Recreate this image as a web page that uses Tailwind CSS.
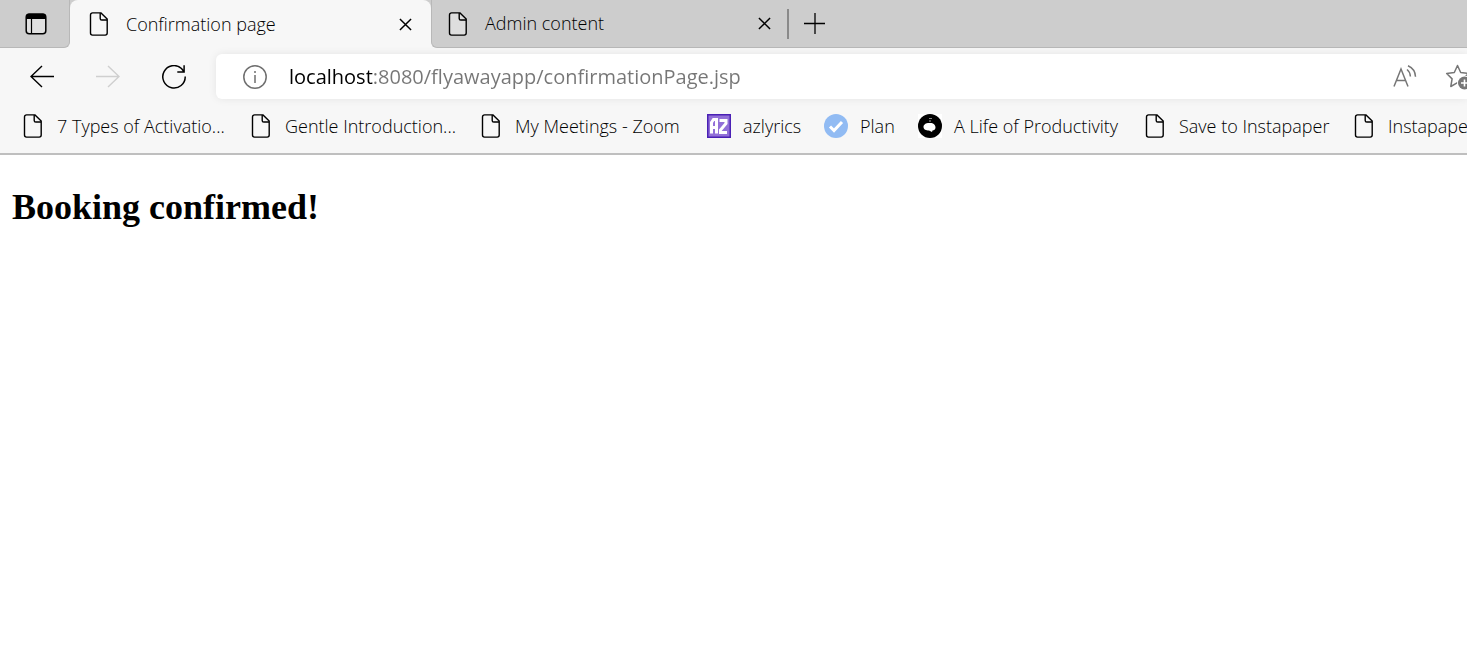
<!DOCTYPE html>
<html lang="en">
<head>
<meta charset="utf-8">
<title>Confirmation page</title>
<script src="https://cdn.jsdelivr.net/npm/@tailwindcss/browser@4"></script>
</head>
<body class="min-h-screen overflow-x-hidden bg-white font-['Open_Sans','Noto_Sans',sans-serif] text-black">
<svg class="hidden" aria-hidden="true">
  <symbol id="doc" viewBox="0 0 24 24"><path d="M5.5 .9H14l6.2 6.2v14a2 2 0 0 1-2 2H5.5a2 2 0 0 1-2-2V2.900a2 2 0 0 1 2-2z" fill="#f7f7f7" fill-opacity=".4" stroke="currentColor" stroke-width="1.400"/><path d="M13.200 1v5.400a1.600 1.600 0 0 0 1.600 1.600H20" fill="none" stroke="currentColor" stroke-width="1.400"/></symbol>
  <symbol id="close" viewBox="0 0 14 14"><path d="M1 1l12 12M13 1L1 13" fill="none" stroke="currentColor" stroke-width="1.600"/></symbol>
</svg>
<header class="overflow-hidden border-b-2 border-[#bfbfbf] bg-[#f7f7f7]">
  <div class="flex h-12 bg-[#f7f7f7]">
    <div class="flex w-[70px] shrink-0 items-center rounded-br-md border-r border-b border-[#b8b8b8] bg-[#cdcdcd] pl-6">
      <button aria-label="Tab actions"><svg class="block size-6" viewBox="0 0 24 24"><rect x="2.200" y="2.200" width="19.600" height="19.600" rx="3" fill="#e0e0e0" stroke="#000" stroke-width="1.500"/><path d="M2 7V4.500A3 3 0 0 1 5 1.500h14a3 3 0 0 1 3 3V7z"/><path d="M7.500 6v16" stroke="#000" stroke-width="1.200"/></svg></button>
    </div>
    <div class="w-[361px] shrink-0 bg-[#cdcdcd]">
      <div class="flex h-12 items-center rounded-t-lg bg-[#f7f7f7] pr-[19px] pl-[17px]">
        <svg class="size-6 shrink-0"><use href="#doc"/></svg>
        <span class="ml-[15px] flex-1 text-[18px] font-light">Confirmation page</span>
        <button aria-label="Close Confirmation page"><svg class="block size-[13px]"><use href="#close"/></svg></button>
      </div>
    </div>
    <div class="flex min-w-0 flex-1 items-center rounded-bl-md border-b border-l border-[#b8b8b8] bg-[#cdcdcd] pl-[14px]">
      <svg class="size-6 shrink-0"><use href="#doc"/></svg>
      <span class="ml-[15px] w-[273px] shrink-0 text-[18px] font-light">Admin content</span>
      <button aria-label="Close Admin content"><svg class="block size-[13px]"><use href="#close"/></svg></button>
      <span class="ml-4 mr-[15px] h-[30px] w-[2px] bg-[#8a8a8a]"></span>
      <button aria-label="New tab"><svg class="block size-[22px]" viewBox="0 0 22 22"><path d="M11 0v21M0 10.500h21" stroke="#000" stroke-width="1.300"/></svg></button>
    </div>
  </div>
  <div class="flex h-[57px] items-center pl-[30px]">
    <button aria-label="Back"><svg class="block size-6" viewBox="0 0 24 24" fill="none" stroke="#000" stroke-width="1.400"><path d="M24 11.500H1M12 1L1 11.500l11 10.500"/></svg></button>
    <button aria-label="Forward" disabled class="ml-[42px]"><svg class="block size-6" viewBox="0 0 24 24" fill="none" stroke="#cfcfcf" stroke-width="1.400"><path d="M0 11.500h23M12 1l11 10.500L12 22"/></svg></button>
    <button aria-label="Reload" class="ml-[42px]"><svg class="block size-6" viewBox="0 0 24 24" fill="none" stroke="#000" stroke-width="1.500"><path d="M23.200 11.500A11.200 11.200 0 1 1 19.500 3.500l2.500 3.200M22.100 .3V6.900h-6.800"/></svg></button>
    <div class="ml-[30px] flex h-[45px] min-w-0 flex-1 items-center rounded-l-md bg-white pl-[27px] shadow-[0_0_8px_rgba(0,0,0,0.08)]">
      <button aria-label="Site information"><svg class="block size-6" viewBox="0 0 24 24" fill="none" stroke="#6f6f6f" stroke-width="1.500"><circle cx="12" cy="12" r="11.200"/><path d="M12 10v8M12 6v2"/></svg></button>
      <input aria-label="Address" value="localhost:8080/flyawayapp/confirmationPage.jsp" class="ml-[22px] min-w-0 flex-1 bg-[linear-gradient(to_right,#000_84px,#767676_84px)] bg-clip-text text-[20px] text-transparent outline-none">
      <button aria-label="Read aloud"><svg class="block size-6" viewBox="0 0 24 24" fill="none" stroke="#767676" stroke-width="1.500"><path d="M1 21.500L8 4l7 17.500M3.500 15.500h9M14 4.500c2 1.500 3.200 3.800 3.400 7M15 .8c4.500 2 7.300 6 7.500 11"/></svg></button>
      <button aria-label="Add to favorites" class="-mr-1 ml-7 shrink-0"><svg class="block size-[26px]" viewBox="0 0 26 26"><path d="M12.500 1.500l3.200 7 7.800 1-5.700 5.400 1.400 7.600-6.700-3.800-6.700 3.800 1.300-7.600L1.700 9.500l7.600-1z" fill="none" stroke="#767676" stroke-width="1.500" stroke-linejoin="round"/><circle cx="19.500" cy="19" r="7.500" fill="#fff"/><circle cx="19.500" cy="19" r="6.500" fill="#767676"/><path d="M19.500 15.500v7M16 19h7" stroke="#fff" stroke-width="1.600"/></svg></button>
    </div>
  </div>
  <nav aria-label="Favorites" class="flex h-12 items-center pb-[6px] pl-[21px] text-[18px] font-light whitespace-nowrap">
    <a href="#" class="flex w-[228px] shrink-0 items-center gap-3"><svg class="size-6 shrink-0"><use href="#doc"/></svg>7 Types of Activatio...</a>
    <a href="#" class="flex w-[230px] shrink-0 items-center gap-3"><svg class="size-6 shrink-0"><use href="#doc"/></svg>Gentle Introduction...</a>
    <a href="#" class="flex w-[228px] shrink-0 items-center gap-3"><svg class="size-6 shrink-0"><use href="#doc"/></svg>My Meetings - Zoom</a>
    <a href="#" class="flex w-[117px] shrink-0 items-center gap-3"><svg class="size-6 shrink-0" viewBox="0 0 24 24"><rect width="24" height="24" fill="#4a20b5"/><rect x="1.500" y="1.500" width="21" height="21" fill="#9270d8"/><path d="M4.500 19.500V8.500L6.500 5.500H9.500V19.500M4.500 13.500H9.500M12.500 6.500H19V9.500L13.500 16V18.500H20" fill="none" stroke="#fff" stroke-width="3"/></svg>azlyrics</a>
    <a href="#" class="flex w-[94px] shrink-0 items-center gap-3"><svg class="size-6 shrink-0" viewBox="0 0 24 24"><circle cx="12" cy="12" r="12" fill="#91bbf3"/><path d="M6 12.500l4 4 8-8.500" fill="none" stroke="#fff" stroke-width="3"/></svg>Plan</a>
    <a href="#" class="flex w-[225px] shrink-0 items-center gap-3"><svg class="size-6 shrink-0" viewBox="0 0 24 24"><rect width="24" height="24" fill="#fff"/><circle cx="12" cy="12" r="12"/><path d="M11 4.500h3M12 6v2" stroke="#888" stroke-width="1.200"/><path d="M5.500 13c0-2.500 2.500-4 5.500-4 4-.5 6.500 1.500 6.500 4.500 0 2-1.500 3-3 3l-.5 1.500-3-1.500c-3 0-5.500-1-5.500-3.500z" fill="#fff"/></svg>A Life of Productivity</a>
    <a href="#" class="flex w-[209px] shrink-0 items-center gap-3"><svg class="size-6 shrink-0"><use href="#doc"/></svg>Save to Instapaper</a>
    <a href="#" class="flex shrink-0 items-center gap-3"><svg class="size-6 shrink-0"><use href="#doc"/></svg>Instapaper</a>
  </nav>
</header>
<main class="px-3 pt-[31px]">
  <h2 class="font-['Liberation_Serif',serif] text-[36px] leading-[42px] font-bold">Booking confirmed!</h2>
</main>
</body>
</html>
